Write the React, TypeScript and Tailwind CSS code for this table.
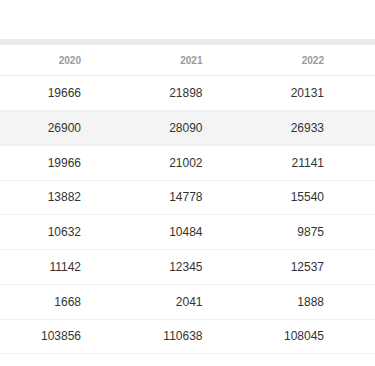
import React from "react";

const rows: [string, string, string][] = [
  ["19666", "21898", "20131"],
  ["26900", "28090", "26933"],
  ["19966", "21002", "21141"],
  ["13882", "14778", "15540"],
  ["10632", "10484", "9875"],
  ["11142", "12345", "12537"],
  ["1668", "2041", "1888"],
  ["103856", "110638", "108045"],
];

export default function App() {
  return (
    <div
      className="w-[375px] h-[366px] overflow-hidden bg-white"
      style={{ fontFamily: '"Liberation Sans", Arial, sans-serif' }}
    >
      <div className="h-[39px]" />
      <div className="h-[6px] bg-[#ebebed]" />
      <div className="flex h-[31.25px] items-center border-b border-[#ececec] box-border">
        {["2020", "2021", "2022"].map((y) => (
          <div
            key={y}
            className="w-[121.5px] shrink-0 pr-[40.5px] text-right text-[10px] font-bold text-[#9a9a9a]"
          >
            {y}
          </div>
        ))}
      </div>
      {rows.map((r, i) => (
        <div
          key={i}
          className={`flex h-[34.75px] items-center border-b border-[#f0f0f0] box-border ${
            i === 1 ? "bg-[#f4f4f4]" : "bg-white"
          }`}
        >
          {r.map((v, j) => (
            <div
              key={j}
              className="w-[121.5px] shrink-0 pr-[40.5px] text-right text-[12px] text-[#333333]"
            >
              {v}
            </div>
          ))}
        </div>
      ))}
    </div>
  );
}
